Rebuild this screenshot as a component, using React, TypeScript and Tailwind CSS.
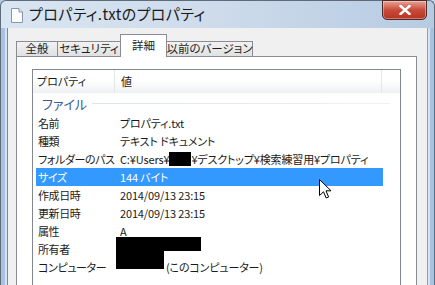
import React from 'react';

const jp = "font-['Noto_Sans_CJK_JP','Noto_Sans',sans-serif] [font-feature-settings:'palt']";

const rows: {label: string; value: React.ReactNode; selected?: boolean}[] = [
  {label: '名前', value: 'プロパティ.txt'},
  {label: '種類', value: 'テキスト ドキュメント'},
  {
    label: 'フォルダーのパス',
    value: (
      <span className="flex items-center">
        C:¥Users¥<span className="inline-block w-[22px] h-[14px] bg-black" />¥デスクトップ¥検索練習用¥プロパティ
      </span>
    ),
  },
  {label: 'サイズ', value: '144 バイト', selected: true},
  {label: '作成日時', value: '2014/09/13 23:15'},
  {label: '更新日時', value: '2014/09/13 23:15'},
  {label: '属性', value: 'A'},
  {label: '所有者', value: ''},
  {label: 'コンピューター', value: <span className="pl-[46px]">(このコンピューター)</span>},
];

const Tab = ( {label, w}: {label: string; w: string} ) => (
  <div className={`${w} h-[15px] border border-b-0 border-[#898c95] bg-gradient-to-b from-[#f2f2f2] to-[#e1e1e1] flex items-center justify-center whitespace-nowrap text-[11.5px] text-[#1e1e1e] -ml-px first:ml-0`}>
    {label}
  </div>
);

export default function App() {
  return (
    <div className={`w-[435px] h-[285px] overflow-hidden relative bg-gradient-to-r from-[#b7cde6] to-[#c5d6ea] ${jp}`}>
      {/* title bar */}
      <div className="h-[28px] flex items-center relative bg-gradient-to-r from-[#d9e5f1] via-[#cddbeb] to-[#b6cbe2] rounded-t-[6px] border border-b-0 border-[#5d6b7d]">
        <svg width="12" height="15" viewBox="0 0 12 15" className="ml-[10px] mt-[1px]">
          <path d="M0.5 0.5 H8 L11.5 4 V14.5 H0.5 Z" fill="#fbfcfd" stroke="#8a96a3" />
          <path d="M8 0.5 V4 H11.5" fill="#e3e8ee" stroke="#8a96a3" />
        </svg>
        <span className="ml-[6px] text-[15px] text-[#1b1b1b] tracking-[0.4px]">プロパティ.txtのプロパティ</span>
        <div className="absolute right-[7px] top-[-1px] w-[45px] h-[20px] rounded-b-[5px] border border-[#4b2a2a] bg-gradient-to-b from-[#e8a293] via-[#c74a3a] to-[#b8331f] flex items-center justify-center shadow-[inset_0_0_0_1px_rgba(255,255,255,0.35)]">
          <svg width="12" height="10" viewBox="0 0 12 10">
            <path d="M1.5 1 L10.5 9 M10.5 1 L1.5 9" stroke="#ffffff" strokeWidth="2.4" strokeLinecap="square" />
          </svg>
        </div>
      </div>

      <div className="flex h-[257px]">
        {/* left frame */}
        <div className="w-[8px] flex">
          <div className="w-px bg-[#5d6b7d]" />
          <div className="w-[4px] bg-[#a8c2e1]" />
          <div className="w-[2px] bg-[#d6e2ef]" />
          <div className="w-px bg-[#7d8796]" />
        </div>

        {/* client */}
        <div className="w-[419px] bg-[#f0f0f0] pl-[8px] pr-[10px] pt-[6px]">
          {/* tabs */}
          <div className="flex items-end h-[22px] relative z-10">
            <Tab label="全般" w="w-[42px]" />
            <Tab label="セキュリティ" w="w-[64px]" />
            <div className="w-[47px] h-[23px] -ml-px -mb-px border border-b-0 border-[#898c95] bg-white flex items-start justify-center pt-[2px] text-[11.5px] text-[#1e1e1e]">
              詳細
            </div>
            <Tab label="以前のバージョン" w="w-[87px] -ml-px" />
          </div>

          {/* panel */}
          <div className="h-[240px] border border-b-0 border-[#898c95] bg-white pt-[12px] pl-[15px] pr-[15px]">
            <div className="h-[230px] border border-b-0 border-[#828790] bg-white text-[11px] text-[#1a1a1a]">
              {/* header */}
              <div className="h-[23px] flex bg-gradient-to-b from-white from-45% to-[#eef0f3]">
                <div className="w-[82px] pl-[4px] flex items-center border-r border-[#e3e5e8]">プロパティ</div>
                <div className="w-[267px] pl-[6px] flex items-center border-r border-[#e3e5e8]">値</div>
              </div>

              {/* group */}
              <div className="h-[21px] flex items-center pl-[9px] pr-[10px]">
                <span className="text-[13px] text-[#3d5b93]">ファイル</span>
                <div className="flex-1 ml-[5px] h-px bg-gradient-to-r from-[#dfe4ec] to-[#eef1f5]" />
              </div>

              {/* rows */}
              <div className="flex flex-col">
                {rows.map( ( r ) => (
                  <div
                    key={r.label}
                    className={`h-[18px] flex items-center ml-[3px] w-[347px] ${r.selected ? 'bg-[#3399ff] text-white' : ''}`}
                  >
                    <div className="w-[84px] pl-[2px] whitespace-nowrap tracking-[-0.4px]">{r.label}</div>
                    <div className="whitespace-nowrap tracking-[-0.15px]">{r.value}</div>
                  </div>
                ) )}
              </div>
            </div>
          </div>
        </div>

        {/* right frame */}
        <div className="w-[8px] flex">
          <div className="w-px bg-[#8aa0bb]" />
          <div className="w-[2px] bg-[#d6e2ef]" />
          <div className="w-[4px] bg-[#a8c2e1]" />
          <div className="w-px bg-[#5d6b7d]" />
        </div>
      </div>

      {/* redacted owner / computer */}
      <div className="absolute left-[116px] top-[237px] w-[85px] h-[14px] bg-black" />
      <div className="absolute left-[116px] top-[250px] w-[48px] h-[19px] bg-black" />

      {/* mouse cursor */}
      <svg width="13" height="21" viewBox="0 0 13 21" className="absolute left-[319px] top-[179px]">
        <path d="M0.5 0.5 V16.5 L4.5 12.8 L7.2 19 L9.6 18 L7 11.8 H12 Z" fill="#ffffff" stroke="#000000" strokeLinejoin="round" />
      </svg>
    </div>
  );
}
